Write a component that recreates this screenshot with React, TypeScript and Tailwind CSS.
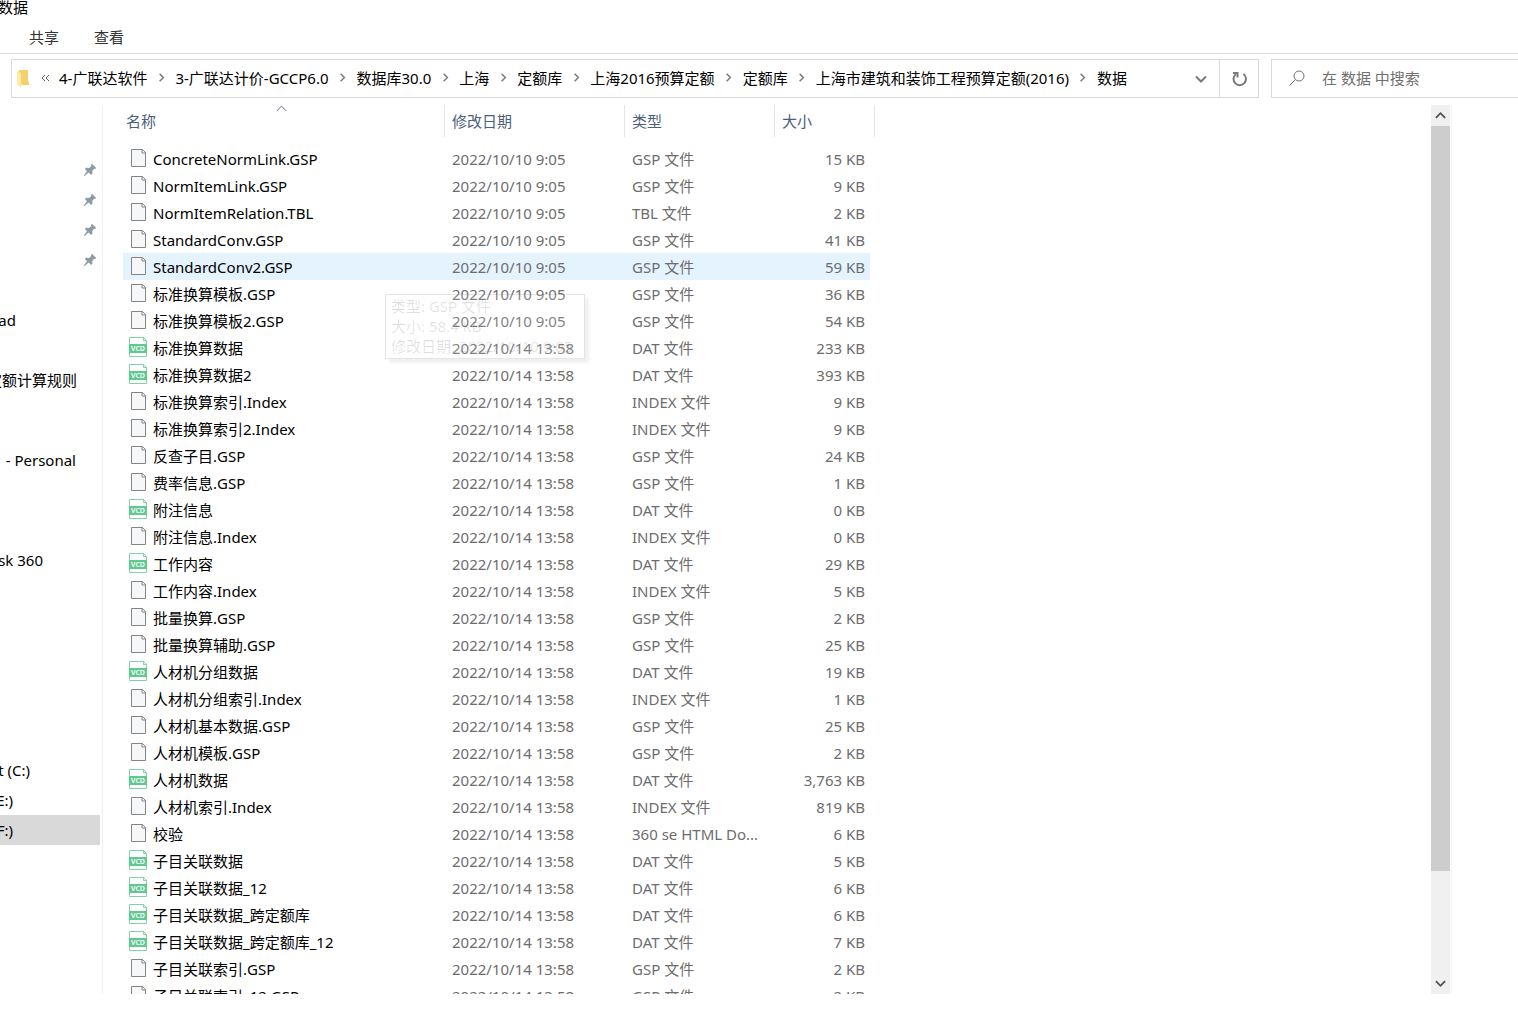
type FileRow = {
  name: string;
  date: string;
  type: string;
  size: string;
  icon?: 'vcd';
};

const EARLY = '2022/10/10 9:05';
const LATE = '2022/10/14 13:58';

const files: FileRow[] = [
  { name: 'ConcreteNormLink.GSP', date: EARLY, type: 'GSP 文件', size: '15 KB' },
  { name: 'NormItemLink.GSP', date: EARLY, type: 'GSP 文件', size: '9 KB' },
  { name: 'NormItemRelation.TBL', date: EARLY, type: 'TBL 文件', size: '2 KB' },
  { name: 'StandardConv.GSP', date: EARLY, type: 'GSP 文件', size: '41 KB' },
  { name: 'StandardConv2.GSP', date: EARLY, type: 'GSP 文件', size: '59 KB' },
  { name: '标准换算模板.GSP', date: EARLY, type: 'GSP 文件', size: '36 KB' },
  { name: '标准换算模板2.GSP', date: EARLY, type: 'GSP 文件', size: '54 KB' },
  { name: '标准换算数据', date: LATE, type: 'DAT 文件', size: '233 KB', icon: 'vcd' },
  { name: '标准换算数据2', date: LATE, type: 'DAT 文件', size: '393 KB', icon: 'vcd' },
  { name: '标准换算索引.Index', date: LATE, type: 'INDEX 文件', size: '9 KB' },
  { name: '标准换算索引2.Index', date: LATE, type: 'INDEX 文件', size: '9 KB' },
  { name: '反查子目.GSP', date: LATE, type: 'GSP 文件', size: '24 KB' },
  { name: '费率信息.GSP', date: LATE, type: 'GSP 文件', size: '1 KB' },
  { name: '附注信息', date: LATE, type: 'DAT 文件', size: '0 KB', icon: 'vcd' },
  { name: '附注信息.Index', date: LATE, type: 'INDEX 文件', size: '0 KB' },
  { name: '工作内容', date: LATE, type: 'DAT 文件', size: '29 KB', icon: 'vcd' },
  { name: '工作内容.Index', date: LATE, type: 'INDEX 文件', size: '5 KB' },
  { name: '批量换算.GSP', date: LATE, type: 'GSP 文件', size: '2 KB' },
  { name: '批量换算辅助.GSP', date: LATE, type: 'GSP 文件', size: '25 KB' },
  { name: '人材机分组数据', date: LATE, type: 'DAT 文件', size: '19 KB', icon: 'vcd' },
  { name: '人材机分组索引.Index', date: LATE, type: 'INDEX 文件', size: '1 KB' },
  { name: '人材机基本数据.GSP', date: LATE, type: 'GSP 文件', size: '25 KB' },
  { name: '人材机模板.GSP', date: LATE, type: 'GSP 文件', size: '2 KB' },
  { name: '人材机数据', date: LATE, type: 'DAT 文件', size: '3,763 KB', icon: 'vcd' },
  { name: '人材机索引.Index', date: LATE, type: 'INDEX 文件', size: '819 KB' },
  { name: '校验', date: LATE, type: '360 se HTML Do...', size: '6 KB' },
  { name: '子目关联数据', date: LATE, type: 'DAT 文件', size: '5 KB', icon: 'vcd' },
  { name: '子目关联数据_12', date: LATE, type: 'DAT 文件', size: '6 KB', icon: 'vcd' },
  { name: '子目关联数据_跨定额库', date: LATE, type: 'DAT 文件', size: '6 KB', icon: 'vcd' },
  { name: '子目关联数据_跨定额库_12', date: LATE, type: 'DAT 文件', size: '7 KB', icon: 'vcd' },
  { name: '子目关联索引.GSP', date: LATE, type: 'GSP 文件', size: '2 KB' },
  { name: '子目关联索引_12.GSP', date: LATE, type: 'GSP 文件', size: '2 KB' },
];

const crumbs = [
  '4-广联达软件',
  '3-广联达计价-GCCP6.0',
  '数据库30.0',
  '上海',
  '定额库',
  '上海2016预算定额',
  '定额库',
  '上海市建筑和装饰工程预算定额(2016)',
  '数据',
];

// the pane is scrolled sideways, so labels are anchored by their right end
const navItems = [
  { label: 'ad', box: 'mt-[30px]', text: 'w-4' },
  { label: '定额计算规则', box: 'mt-[30px]', text: 'w-[77px]' },
  { label: '- Personal', box: 'mt-[50px]', text: 'w-[76px]' },
  { label: 'sk 360', box: 'mt-[70px]', text: 'w-[43px]' },
  { label: 't (C:)', box: 'mt-[180px]', text: 'w-[30px]' },
  { label: 'E:)', box: '', text: 'w-[13px]' },
  { label: 'F:)', box: 'bg-[#d9d9d9]', text: 'w-[13px]' },
];

function Chevron({ className, strokeWidth = 2 }: { className: string; strokeWidth?: number }) {
  return (
    <svg className={className} viewBox="0 0 12 12" fill="none" stroke="currentColor" strokeWidth={strokeWidth}>
      <path d="M1 3.5l5 5 5-5" />
    </svg>
  );
}

function FileIcon() {
  return (
    <svg className="h-[22px] w-[18px] shrink-0" viewBox="0 0 18 22" fill="none">
      <path d="M2.5 1.5h11l3 3v14h-14z" fill="#f6f7f9" />
      <path d="M16.500 4.500v14h-14v-17h11" stroke="#858585" />
      <path d="M13 1.500v3.500h3.500M13 1.500h.5l3 3v.5" stroke="#858585" />
    </svg>
  );
}

function VcdIcon() {
  return (
    <svg className="h-[22px] w-[18px] shrink-0" viewBox="0 0 18 22" fill="none">
      <path d="M.5.5h14l3 3v16H.5z" fill="#fff" stroke="#7fd3a5" />
      <path d="M14.500.5v3h3" stroke="#7fd3a5" />
      <path d="M0 7h18v9H0z" fill="#5fca90" />
      <text x="9" y="14" textAnchor="middle" fontSize="7" fontWeight="600" fill="#fff">
        VCD
      </text>
    </svg>
  );
}

function PinIcon() {
  return (
    <svg className="h-[14px] w-[14px]" viewBox="0 0 14 14" fill="#8f9aa3">
      <path d="M9 .8l4.200 4.200-1 .9-1-.2-2 2.200.3 2.600-1.400 1.400-2.500-2.500L1.600 12.900.8 12.400l3.200-4.200L1.800 6l1.300-1.300 3 .2 2.200-2-.3-1.200z" />
    </svg>
  );
}

function AddressBar() {
  return (
    <div className="flex h-[39px] min-w-0 flex-1 border border-[#d9d9d9]">
      <nav className="flex min-w-0 flex-1 items-center overflow-hidden pb-[2px] pl-[5px]">
        <svg className="h-[18px] w-[12px] shrink-0" viewBox="0 0 12 18">
          <path d="M2 1h9v11l1 .5V16H2z" fill="#f5d06b" />
          <path d="M0 1.500L4 4v14L0 16z" fill="#fde9a9" />
        </svg>
        <button className="ml-3 w-[10px] shrink-0 text-[#5c5c5c]" aria-label="上级文件夹">
          <svg className="h-2 w-[9px]" viewBox="0 0 9 8" fill="none" stroke="currentColor">
            <path d="M4 1L1 4l3 3M8 1L5 4l3 3" />
          </svg>
        </button>
        <ol className="flex pl-2">
          {crumbs.map((crumb, index) => (
            <li key={index} className="flex items-center whitespace-nowrap">
              {index > 0 && (
                <span className="flex w-7 justify-center text-[#7a7a7a]">
                  <Chevron className="h-[9px] w-[9px] -rotate-90" />
                </span>
              )}
              <button>{crumb}</button>
            </li>
          ))}
        </ol>
      </nav>
      <button className="flex w-9 items-center justify-center text-[#7a7a7a]" aria-label="历史记录">
        <Chevron className="h-3 w-3" />
      </button>
      <button
        className="flex w-[39px] items-center justify-center border-l border-[#d9d9d9] text-[#7a7a7a]"
        aria-label="刷新"
      >
        <svg className="h-4 w-4" viewBox="0 0 16 16" fill="none" stroke="currentColor" strokeWidth="2">
          <path d="M12.500 3A6.200 6.200 0 1 1 5 3" />
          <path d="M2 2h4.500v4.500" />
        </svg>
      </button>
    </div>
  );
}

function Sidebar() {
  return (
    <aside className="w-[103px] shrink-0 overflow-hidden border-r border-[#f0f0f0] pt-[50px]">
      <ul className="w-[100px]">
        {[0, 1, 2, 3].map((pin) => (
          <li key={pin} className="flex h-[30px] items-center justify-end pr-[3px]">
            <PinIcon />
          </li>
        ))}
        {navItems.map((item) => (
          <li key={item.label} className={`flex h-[30px] items-center ${item.box}`}>
            <a href="#" className={`flex justify-end whitespace-nowrap ${item.text}`}>
              {item.label}
            </a>
          </li>
        ))}
      </ul>
    </aside>
  );
}

function FileTable() {
  return (
    <table className="w-[752px] table-fixed border-separate border-spacing-0 text-left">
      <colgroup>
        <col className="w-[322px]" />
        <col className="w-[180px]" />
        <col className="w-[150px]" />
        <col className="w-[95px]" />
        <col className="w-[5px]" />
      </colgroup>
      <thead className="text-[#4c607a]">
        <tr className="h-8">
          <th className="relative border-r border-[#e5e5e5] p-0 pl-[3px] font-normal">
            名称
            <Chevron className="absolute -top-[2px] left-[153px] h-[11px] w-[11px] rotate-180" strokeWidth={1} />
          </th>
          <th className="border-r border-[#e5e5e5] p-0 pl-[7px] font-normal">修改日期</th>
          <th className="border-r border-[#e5e5e5] p-0 pl-[7px] font-normal">类型</th>
          <th colSpan={2} className="border-r border-[#e5e5e5] p-0 pl-[7px] font-normal">
            大小
          </th>
        </tr>
      </thead>
      <tbody className="text-[#6d6d6d] before:block before:h-2">
        {files.map((file) => {
          const hovered = file.name === 'StandardConv2.GSP';
          return (
            <tr key={file.name} className={hovered ? '[&>td]:bg-[#e5f3ff]' : ''}>
              <td className="h-[27px] p-0 text-black">
                <div className="flex h-[27px] items-center gap-[6px] pl-[6px] whitespace-nowrap">
                  {file.icon === 'vcd' ? <VcdIcon /> : <FileIcon />}
                  {file.name}
                </div>
              </td>
              <td className="p-0 pl-[7px] whitespace-nowrap">{file.date}</td>
              <td className="p-0 pl-[7px] whitespace-nowrap">{file.type}</td>
              <td className="p-0 pr-[5px] text-right whitespace-nowrap">{file.size}</td>
            </tr>
          );
        })}
      </tbody>
    </table>
  );
}

function Scrollbar() {
  return (
    <div className="mr-px flex w-[19px] shrink-0 flex-col bg-[#f0f0f0] text-[#505050]">
      <button className="flex h-[21px] items-center justify-center" aria-label="向上滚动">
        <Chevron className="h-[11px] w-[11px] rotate-180" />
      </button>
      <div className="flex-1">
        <div className="h-[88%] bg-[#cdcdcd]" />
      </div>
      <button className="flex h-[21px] items-center justify-center" aria-label="向下滚动">
        <Chevron className="h-[11px] w-[11px]" />
      </button>
    </div>
  );
}

export default function App() {
  return (
    <div className="flex h-screen flex-col overflow-hidden bg-white font-['Noto_Sans','Noto_Sans_CJK_SC',sans-serif] text-[15px] leading-5 text-black">
      <header>
        <div className="flex h-[22px] items-start">
          <h1 className="-mt-[3px] flex w-7 justify-end whitespace-nowrap">数据</h1>
        </div>
        <div className="flex h-8 items-center gap-[35px] border-b border-[#d9d9d9] pb-[2px] pl-[29px] text-[#333]">
          <button>共享</button>
          <button>查看</button>
        </div>
      </header>

      <div className="flex gap-3 pt-[5px] pl-[11px]">
        <AddressBar />
        <label className="flex h-[39px] w-[247px] items-center gap-4 border border-r-0 border-[#d9d9d9] pb-[2px] pl-4 text-[#707070]">
          <svg className="h-[18px] w-[18px] shrink-0" viewBox="0 0 18 18" fill="none" stroke="currentColor">
            <circle cx="11" cy="7" r="5" />
            <path d="M7.500 10.500L1.500 16.500" />
          </svg>
          <input
            className="min-w-0 flex-1 outline-none placeholder:text-[#707070]"
            placeholder="在 数据 中搜索"
            aria-label="搜索"
          />
        </label>
      </div>

      <main className="mt-[7px] mr-[66px] mb-[27px] flex min-h-0 flex-1 border-r border-[#f5f5f5]">
        <Sidebar />
        <section className="relative min-w-0 flex-1 overflow-hidden pl-5">
          <FileTable />
          <div
            role="tooltip"
            className="absolute top-[189px] left-[282px] w-[200px] border border-black/10 bg-white/15 px-[5px] pt-px pb-[2px] whitespace-nowrap text-black/12 shadow-[4px_4px_3px_rgba(0,0,0,0.06)]"
          >
            <p>类型: GSP 文件</p>
            <p>大小: 58.4 KB</p>
            <p>修改日期: 2022/10/10 9:05</p>
          </div>
        </section>
        <Scrollbar />
      </main>
    </div>
  );
}
